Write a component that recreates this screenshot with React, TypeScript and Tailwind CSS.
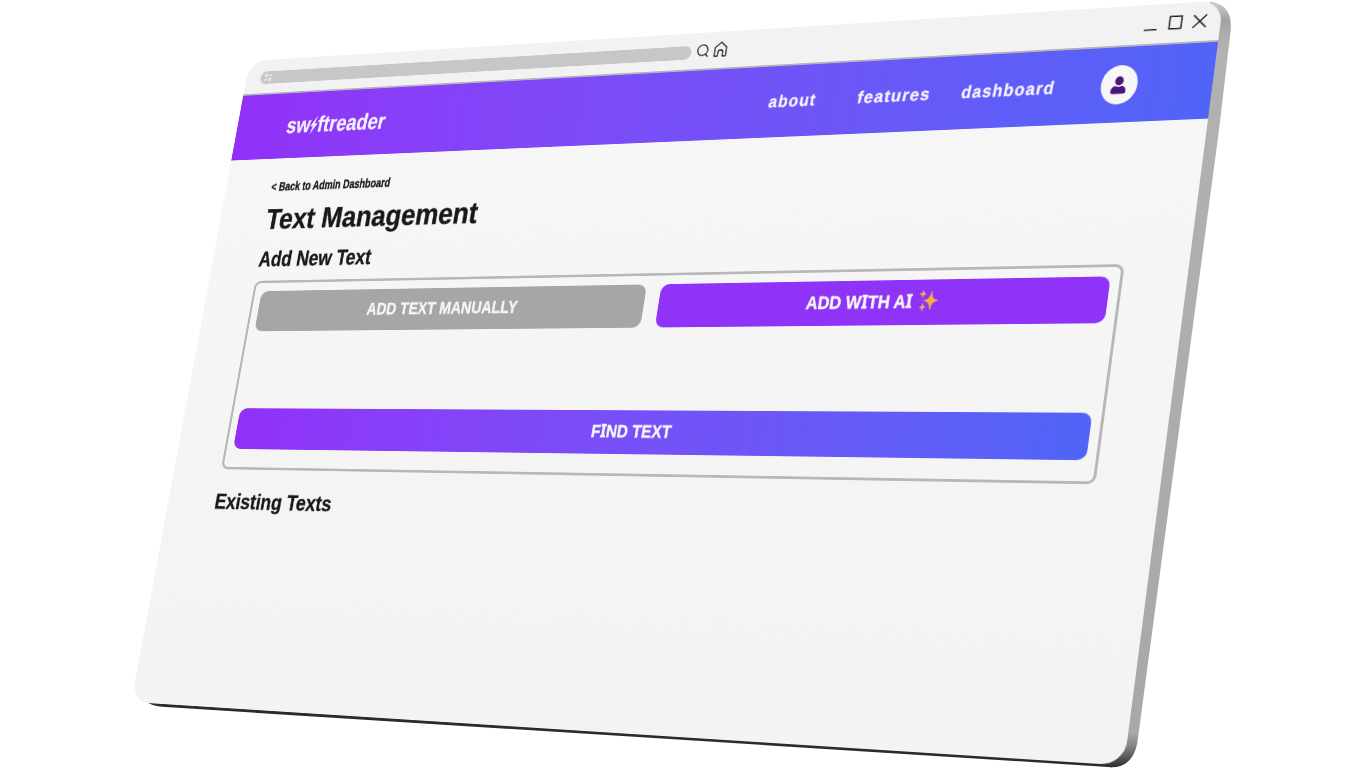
import React, { useLayoutEffect, useRef, useState } from "react";

type FitProps = {
  width: number;
  skew?: number;
  className: string;
  children: React.ReactNode;
};

/* A line of text squeezed or stretched to a set width. */
function FitText({ width, skew = 0, className, children }: FitProps) {
  const ref = useRef<HTMLSpanElement>(null);
  const [scale, setScale] = useState(1);
  useLayoutEffect(() => {
    if (ref.current) setScale(width / ref.current.offsetWidth);
  }, [width]);
  return (
    <span className="block shrink-0 leading-[0]" style={{ width }}>
      <span
        ref={ref}
        className={`inline-block origin-left align-top whitespace-nowrap [-webkit-text-stroke:0.4px_currentColor] ${className}`}
        style={{ transform: `scaleX(${scale}) skewX(${-skew}deg)` }}
      >
        {children}
      </span>
    </span>
  );
}

function SerifI() {
  return <span className="font-['Noto_Sans',sans-serif] leading-none">I</span>;
}

function BrowserBar() {
  return (
    <div className="flex h-[43px] items-start rounded-t-[24px] bg-[#f2f2f2] pl-[21px] text-[#1c1c1c]">
      <div className="mt-[14.5px] flex h-[16.5px] w-[579px] items-center rounded-full bg-[#c5c8c7] pl-[5px]">
        <svg width="12" height="12" viewBox="0 0 12 12" fill="none" stroke="#f4f4f4" strokeWidth="1.2">
          <circle cx="3" cy="3.2" r="1.6" />
          <path d="M6.5 3.2h5M.5 8.8h5" />
          <circle cx="8.6" cy="8.8" r="1.6" />
        </svg>
      </div>
      <svg className="mt-[13px] ml-[6px]" width="16" height="17" viewBox="0 0 16 17" fill="none" stroke="currentColor" strokeWidth="1.4">
        <circle cx="7.9" cy="7.8" r="6.2" />
        <path d="M11.9 12.500l3 3.600" />
      </svg>
      <svg className="mt-[11px] ml-[5px]" width="18" height="19" viewBox="0 0 18 19" fill="none" stroke="currentColor" strokeWidth="1.4" strokeLinejoin="round">
        <path d="M2 7.800 9 1.500l7 6.300v10.200h-4v-4.300a3 3 0 0 0-6 0v4.300h-4z" />
      </svg>
      <svg className="mt-[11px] ml-auto mr-[13.500px]" width="70" height="20" viewBox="0 0 70 20" fill="none" stroke="currentColor" strokeWidth="1.5">
        <path d="M3 16.7h13.5" />
        <path d="M29.500 3.200h12.5v13.6h-12.5z" />
        <path d="M54.300 3.200l13.700 13.800M68 3.200L54.300 17" />
      </svg>
    </div>
  );
}

function NavBar() {
  const link = "text-[19.500px] leading-6 tracking-[1.3px]";
  return (
    <nav className="flex h-[85px] items-center border-t-2 border-[#b4b2bd] bg-linear-to-r from-[#9230f8] to-[#5064f8] bg-origin-border pl-[72px] font-bold text-[#f6f2ff]">
      <FitText width={139} skew={3} className="text-[28px] leading-8">
        sw
        <svg className="inline-block align-[-4px]" width="11" height="26" viewBox="0 0 11 26" fill="currentColor">
          <path d="M9.500 1 .5 14.500l4 .2L1.500 25.500 11 11.500l-4.400-.2z" />
        </svg>
        ftreader
      </FitText>
      <div className="ml-auto flex items-center pb-px">
        <FitText width={57} skew={4} className={link}>about</FitText>
        <div className="w-[48px]" />
        <FitText width={84} skew={4} className={link}>features</FitText>
        <div className="w-[35px]" />
        <FitText width={103} skew={4} className={link}>dashboard</FitText>
      </div>
      <div className="mr-[79.500px] ml-[50px] flex h-[43px] w-[38.500px] items-center justify-center rounded-[50%] bg-[#f7f7f7]">
        <svg width="18" height="22" viewBox="0 0 18 22" fill="#4d1674">
          <ellipse cx="9.300" cy="6.200" rx="4.500" ry="5" />
          <path d="M1 18c0-3.600 1.800-6 4.300-6 1.100 0 2 .8 3.700.8s2.600-.8 3.700-.8c2.500 0 4.300 2.400 4.300 6 0 1.700-.8 2.500-2.200 2.500H3.200C1.800 20.500 1 19.700 1 18z" />
        </svg>
      </div>
    </nav>
  );
}

function AddTextBox() {
  const label = "text-[20.500px] leading-[48px]";
  return (
    <section className="mt-[11px] flex h-[233px] w-[1066px] flex-col justify-between rounded-[9px] border-3 border-[#b7b7b7] pt-[10px] pr-[10px] pb-[22px] pl-[9px] font-bold text-[#f5f5f5]">
      <div className="flex justify-between">
        <button className="flex h-[50px] w-[512px] items-start rounded-[10px] bg-[#a6a6a6] pl-[152px]">
          <FitText width={200} className={label}>ADD TEXT MANUALLY</FitText>
        </button>
        <button className="flex h-[50px] w-[511px] items-start rounded-[10px] bg-[#8e33f7] pl-[177px]">
          <FitText width={122} className={label}>
            ADD W<SerifI />TH A<SerifI />
          </FitText>
          <svg className="mt-[12px] ml-[6.500px]" width="21" height="23" viewBox="0 0 21 23" fill="#f9ae45" stroke="#f9ae45" strokeWidth=".9">
            <path d="M13 1.500c.9 6 2.200 8.400 7.500 9.700-5.300 1.300-6.600 3.700-7.500 9.800-.9-6.100-2.200-8.500-7.500-9.800 5.300-1.300 6.600-3.700 7.500-9.700z" />
            <path d="M3.600 0c.4 2.500 1 3.300 3.200 3.900-2.200.6-2.800 1.400-3.200 3.900C3.200 5.300 2.600 4.500.4 3.900 2.600 3.300 3.200 2.500 3.600 0zM4.600 14.500c.4 2.500 1 3.300 3.200 3.900-2.200.6-2.800 1.400-3.200 3.900-.4-2.500-1-3.300-3.200-3.900 2.200-.6 2.800-1.400 3.200-3.900z" />
          </svg>
        </button>
      </div>
      <button className="flex h-[50px] items-start rounded-[10px] bg-linear-to-r from-[#9230f8] to-[#5064f8] pl-[472px]">
        <FitText width={98} className={label}>
          F<SerifI />ND TEXT
        </FitText>
      </button>
    </section>
  );
}

function WindowEdge() {
  return (
    <svg className="absolute inset-0" width="1366" height="768" viewBox="0 0 1366 768">
      <defs>
        <linearGradient id="side" gradientUnits="userSpaceOnUse" x1="1140" y1="0" x2="1140" y2="768">
          <stop offset="0" stopColor="#d2d2d2" />
          <stop offset="0.025" stopColor="#a3a3a3" />
          <stop offset="0.06" stopColor="#b2b2b2" />
          <stop offset="0.955" stopColor="#a8a8a8" />
          <stop offset="0.975" stopColor="#7a7a7a" />
          <stop offset="1" stopColor="#2a2a2a" />
        </linearGradient>
      </defs>
      <path d="M144 700 Q151 706 162 706.800 L1112 767.200 L1112 740 L300 680Z" fill="#2b2b2d" />
      <path d="M1210 1.500 C1226 4 1232.500 13 1230.500 32 L1219 130 L1138 738 C1136 757 1127 768 1110 767.200 L1090 740 L1180 100Z" fill="url(#side)" />
    </svg>
  );
}

export default function App() {
  return (
    <main className="relative h-[768px] w-[1366px] overflow-hidden bg-white font-['Liberation_Sans',sans-serif]">
      <WindowEdge />
      <div className="relative h-[800px] w-[1200px] origin-top-left rounded-[24px] bg-linear-to-b from-[#f7f7f7] to-[#f3f3f3] shadow-[0_0_2px_2px_#ffffff01] [transform:matrix3d(0.6492078,-0.050483,0,-0.0001326567,-0.1536159,0.7705562,0,-0.0000437233,0,0,1,0,249.6,61,0,1)]">
        <BrowserBar />
        <NavBar />
        <div className="pt-[26px] pl-[67px] font-bold text-[#191919]">
          <FitText width={167} className="-ml-px text-[15.500px] leading-5">&lt; Back to Admin Dashboard</FitText>
          <h1 className="mt-[11px]">
            <FitText width={291} className="text-[36px] leading-10">Text Management</FitText>
          </h1>
          <h2 className="mt-[13.500px]">
            <FitText width={157} className="text-[26.500px] leading-8">Add New Text</FitText>
          </h2>
          <AddTextBox />
          <h2 className="mt-[23.500px]">
            <FitText width={162} className="text-[26px] leading-8">Existing Texts</FitText>
          </h2>
        </div>
      </div>
    </main>
  );
}
